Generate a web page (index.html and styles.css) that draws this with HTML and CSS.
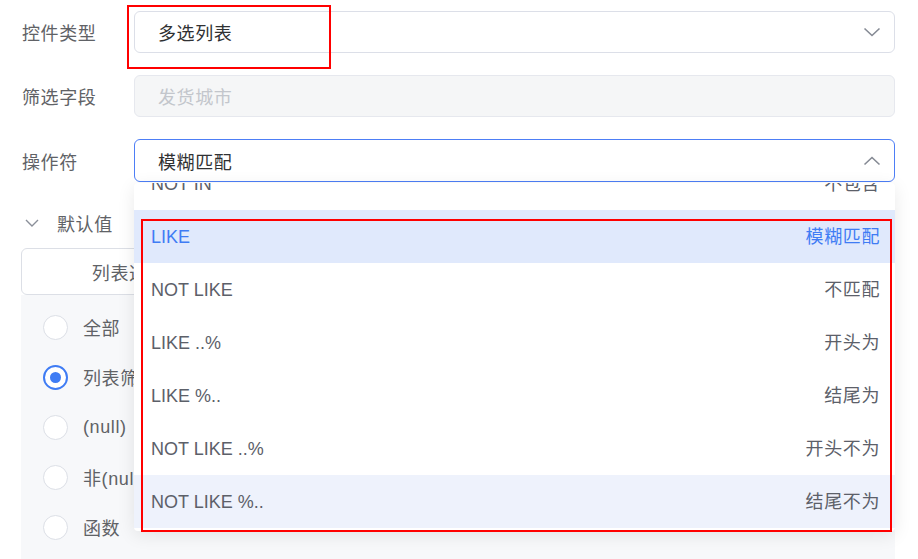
FILE: index.html
```html
<!DOCTYPE html>
<html lang="zh">
<head>
<meta charset="utf-8">
<title>筛选配置</title>
<link rel="stylesheet" href="styles.css">
</head>
<body>
<div class="page">
  <div class="form-row">
    <div class="label">控件类型</div>
    <div class="select">
      <span class="value">多选列表</span>
      <svg class="chev" width="18" height="10" viewBox="0 0 18 10"><path d="M1.5 1.5 L9 8.5 L16.5 1.5" fill="none" stroke="#858a94" stroke-width="1.6"/></svg>
    </div>
  </div>
  <div class="form-row">
    <div class="label">筛选字段</div>
    <div class="select disabled">
      <span class="value">发货城市</span>
    </div>
  </div>
  <div class="form-row">
    <div class="label">操作符</div>
    <div class="select focused">
      <span class="value">模糊匹配</span>
      <svg class="chev" width="18" height="10" viewBox="0 0 18 10"><path d="M1.5 8.5 L9 1.5 L16.5 8.5" fill="none" stroke="#858a94" stroke-width="1.6"/></svg>
    </div>
  </div>

  <div class="section">
    <div class="section-head">
      <svg width="14" height="8" viewBox="0 0 14 8"><path d="M1 1 L7 7 L13 1" fill="none" stroke="#8a8f99" stroke-width="1.4"/></svg>
      <span>默认值</span>
    </div>
    <div class="tabs">
      <div class="tab">列表选择</div>
      <div class="tab">手动输入</div>
    </div>
    <div class="panel">
      <div class="radio-row"><span class="radio"></span><span>全部</span></div>
      <div class="radio-row"><span class="radio checked"></span><span>列表筛选</span></div>
      <div class="radio-row"><span class="radio"></span><span>(null)</span></div>
      <div class="radio-row"><span class="radio"></span><span>非(null)</span></div>
      <div class="radio-row"><span class="radio"></span><span>函数</span></div>
    </div>
  </div>

  <div class="dropdown">
    <ul class="options">
      <li class="option"><span>NOT IN</span><span>不包含</span></li>
      <li class="option selected"><span>LIKE</span><span>模糊匹配</span></li>
      <li class="option"><span>NOT LIKE</span><span>不匹配</span></li>
      <li class="option"><span>LIKE ..%</span><span>开头为</span></li>
      <li class="option"><span>LIKE %..</span><span>结尾为</span></li>
      <li class="option"><span>NOT LIKE ..%</span><span>开头不为</span></li>
      <li class="option hover"><span>NOT LIKE %..</span><span>结尾不为</span></li>
    </ul>
  </div>

  <div class="mark mark-type"></div>
  <div class="mark mark-list"></div>
</div>
</body>
</html>
```

FILE: styles.css
```css
* { box-sizing: border-box; }
html, body { margin: 0; padding: 0; background: #fff; }
body {
  font-family: "Liberation Sans", "Noto Sans CJK SC", sans-serif;
  font-size: 18px;
  color: #303133;
  width: 918px;
  height: 559px;
  overflow: hidden;
}
.page {
  position: relative;
  padding: 11px 23px 0 21px;
  height: 559px;
}
.form-row {
  display: flex;
  align-items: center;
  margin-bottom: 22px;
}
.form-row:nth-child(3) { margin-bottom: 0; }
.label {
  width: 113px;
  padding-left: 1px;
  color: #606266;
  letter-spacing: 0.6px;
}
.select {
  flex: 1;
  height: 42px;
  border: 1px solid #dcdfe8;
  border-radius: 6px;
  display: flex;
  align-items: center;
  justify-content: space-between;
  padding: 0 13px 0 23px;
  background: #fff;
}
.select .value { letter-spacing: 0.6px; }
.select.disabled { background: #f5f6f7; border-color: #e6e8ee; }
.select.disabled .value { color: #c3c6cc; }
.select.focused { border-color: #4d7ef6; height: 43px; }
.chev { display: block; }

.section { margin-top: 28px; }
.section-head {
  display: flex;
  align-items: center;
  gap: 18px;
  padding-left: 4px;
  height: 26px;
  color: #606266;
  letter-spacing: 0.6px;
}
.tabs {
  display: flex;
  margin-top: 12px;
  height: 47px;
  border: 1px solid #dcdfe6;
  border-radius: 6px;
  background: #fff;
}
.tab {
  width: 214px;
  display: flex;
  align-items: center;
  justify-content: center;
  color: #606266;
  letter-spacing: 0.6px;
}
.panel {
  background: #f7f8fa;
  padding-top: 7px;
  height: 270px;
}
.radio-row {
  display: flex;
  align-items: center;
  height: 50px;
  padding-left: 22px;
  gap: 15px;
  color: #606266;
  letter-spacing: 0.6px;
}
.radio {
  width: 25px;
  height: 25px;
  border-radius: 50%;
  border: 1px solid #dcdfe6;
  background: #fff;
  display: flex;
  align-items: center;
  justify-content: center;
  flex: none;
}
.radio.checked { border: 2px solid #3f7cf4; }
.radio.checked::after {
  content: "";
  width: 11px;
  height: 11px;
  border-radius: 50%;
  background: #3f7cf4;
}

.dropdown {
  position: absolute;
  top: 183px;
  left: 134px;
  width: 761px;
  height: 348px;
  background: #fff;
  border-radius: 4px;
  box-shadow: 0 4px 18px rgba(0, 0, 0, 0.09);
  overflow: hidden;
}
.options {
  list-style: none;
  margin: -26px 0 0 0;
  padding: 0;
}
.option {
  height: 53px;
  display: flex;
  align-items: baseline;
  justify-content: space-between;
  padding: 14px 15px 0 17px;
  line-height: 26px;
  color: #5c6069;
}
.option span:last-child { letter-spacing: 0.6px; }
.option.selected { background: #e0e9fc; color: #3f7cf4; }
.option.hover { background: #eef2fc; }

.mark {
  position: absolute;
  border: 2px solid #f00;
  pointer-events: none;
}
.mark-type { left: 127px; top: 5px; width: 204px; height: 64px; }
.mark-list { left: 141px; top: 219px; width: 751px; height: 313px; }
```
